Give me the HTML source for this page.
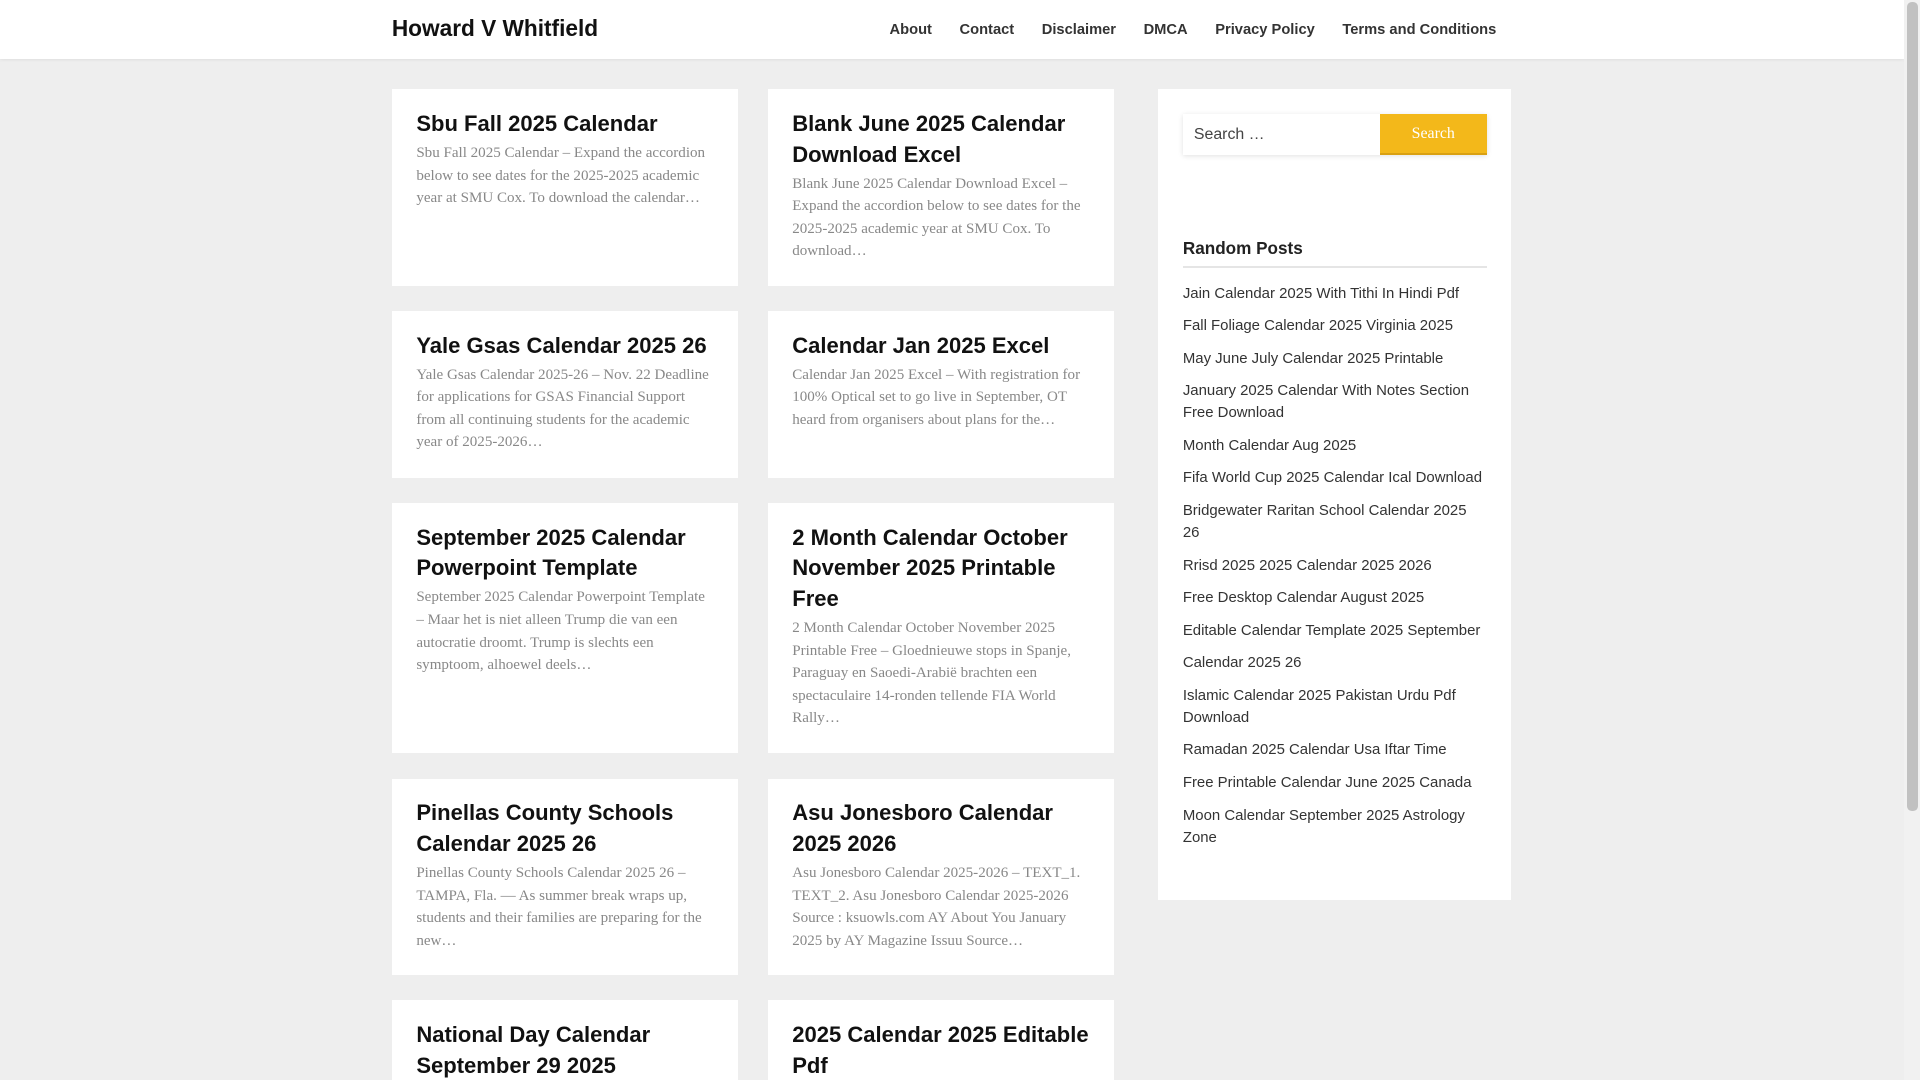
<!DOCTYPE html>
<html><head><meta charset="utf-8"><style>
html{margin:0;padding:0;width:1920px;height:1080px;overflow:hidden}
body{margin:0;padding:0;width:1568px;height:882px;overflow:hidden;zoom:1.22449;background:#eee;font-family:"Liberation Sans",sans-serif;color:#222;position:relative}
.hdr{position:absolute;left:0;top:0;width:1555px;height:48px;background:#fff;box-shadow:0 1px 3px rgba(0,0,0,.08)}
.logo{position:absolute;left:320px;top:12px;font-size:18.5px;font-weight:bold;color:#111}
.nav{position:absolute;right:333px;top:18px;font-size:12px;font-weight:bold;color:#333}
.nav span{margin-left:22.5px}
.sb{position:absolute;right:0;top:0;width:13px;height:882px;background:#f1f1f1}
.sb div{position:absolute;left:2px;top:2px;width:9px;height:660px;background:#c1c1c1;border-radius:4px}
.card{position:absolute;background:#fff;width:243px;padding:16px 20px 20px}
.card h2{margin:0 0 2px;font-size:18px;line-height:25px;font-weight:bold;color:#111}
.card p{margin:0;font-family:"Liberation Serif",serif;font-size:12.3px;line-height:18.4px;color:#888}
.side{position:absolute;left:946px;top:73px;width:248px;height:622px;background:#fff;padding:20px}
.srch{display:flex;box-shadow:0 1px 4px rgba(0,0,0,.12);height:34px}
.srch .in{flex:1;font-size:13px;color:#444;line-height:34px;padding-left:9px}
.srch .bt{width:87px;background:#f3b81a;border-bottom:2px solid #d9a012;color:#fff;font-family:"Liberation Serif",serif;font-size:13px;text-align:center;line-height:32px}
.side h3{margin:67px 0 0;font-size:14px;font-weight:bold;color:#222;padding-bottom:6px;border-bottom:2px solid #e5e5e5}
.side ul{list-style:none;margin:12px 0 0;padding:0;font-size:12.2px;line-height:18px;color:#333}
.side li{margin-bottom:8.6px}
</style></head><body>
<div class="hdr"><div class="logo">Howard V Whitfield</div>
<div class="nav"><span>About</span><span>Contact</span><span>Disclaimer</span><span>DMCA</span><span>Privacy Policy</span><span>Terms and Conditions</span></div></div>
<div class="sb"><div></div></div>

<div class="card" style="left:320px;top:73px;height:125px"><h2>Sbu Fall 2025 Calendar</h2><p>Sbu Fall 2025 Calendar – Expand the accordion below to see dates for the 2025-2025 academic year at SMU Cox. To download the calendar…</p></div>
<div class="card" style="left:627px;top:73px;height:125px"><h2>Blank June 2025 Calendar Download Excel</h2><p>Blank June 2025 Calendar Download Excel – Expand the accordion below to see dates for the 2025-2025 academic year at SMU Cox. To download…</p></div>
<div class="card" style="left:320px;top:254px;height:100px"><h2>Yale Gsas Calendar 2025 26</h2><p>Yale Gsas Calendar 2025-26 – Nov. 22 Deadline for applications for GSAS Financial Support from all continuing students for the academic year of 2025-2026…</p></div>
<div class="card" style="left:627px;top:254px;height:100px"><h2>Calendar Jan 2025 Excel</h2><p>Calendar Jan 2025 Excel – With registration for 100% Optical set to go live in September, OT heard from organisers about plans for the…</p></div>
<div class="card" style="left:320px;top:411px;height:168px"><h2>September 2025 Calendar Powerpoint Template</h2><p>September 2025 Calendar Powerpoint Template – Maar het is niet alleen Trump die van een autocratie droomt. Trump is slechts een symptoom, alhoewel deels…</p></div>
<div class="card" style="left:627px;top:411px;height:168px"><h2>2 Month Calendar October November 2025 Printable Free</h2><p>2 Month Calendar October November 2025 Printable Free – Gloednieuwe stops in Spanje, Paraguay en Saoedi-Arabië brachten een spectaculaire 14-ronden tellende FIA World Rally…</p></div>
<div class="card" style="left:320px;top:636px;height:124px"><h2>Pinellas County Schools Calendar 2025 26</h2><p>Pinellas County Schools Calendar 2025 26 – TAMPA, Fla. — As summer break wraps up, students and their families are preparing for the new…</p></div>
<div class="card" style="left:627px;top:636px;height:124px"><h2>Asu Jonesboro Calendar 2025 2026</h2><p>Asu Jonesboro Calendar 2025-2026 – TEXT_1. TEXT_2. Asu Jonesboro Calendar 2025-2026 Source : ksuowls.com AY About You January 2025 by AY Magazine Issuu Source…</p></div>
<div class="card" style="left:320px;top:817px;height:29px"><h2>National Day Calendar September 29 2025</h2></div>
<div class="card" style="left:627px;top:817px;height:29px"><h2>2025 Calendar 2025 Editable Pdf</h2></div>

<div class="side">
<div class="srch"><div class="in">Search …</div><div class="bt">Search</div></div>
<h3>Random Posts</h3>
<ul>
<li>Jain Calendar 2025 With Tithi In Hindi Pdf</li>
<li>Fall Foliage Calendar 2025 Virginia 2025</li>
<li>May June July Calendar 2025 Printable</li>
<li>January 2025 Calendar With Notes Section Free Download</li>
<li>Month Calendar Aug 2025</li>
<li>Fifa World Cup 2025 Calendar Ical Download</li>
<li>Bridgewater Raritan School Calendar 2025<br>26</li>
<li>Rrisd 2025 2025 Calendar 2025 2026</li>
<li>Free Desktop Calendar August 2025</li>
<li>Editable Calendar Template 2025 September</li>
<li>Calendar 2025 26</li>
<li>Islamic Calendar 2025 Pakistan Urdu Pdf<br>Download</li>
<li>Ramadan 2025 Calendar Usa Iftar Time</li>
<li>Free Printable Calendar June 2025 Canada</li>
<li>Moon Calendar September 2025 Astrology<br>Zone</li>
</ul>
</div>
</body></html>
